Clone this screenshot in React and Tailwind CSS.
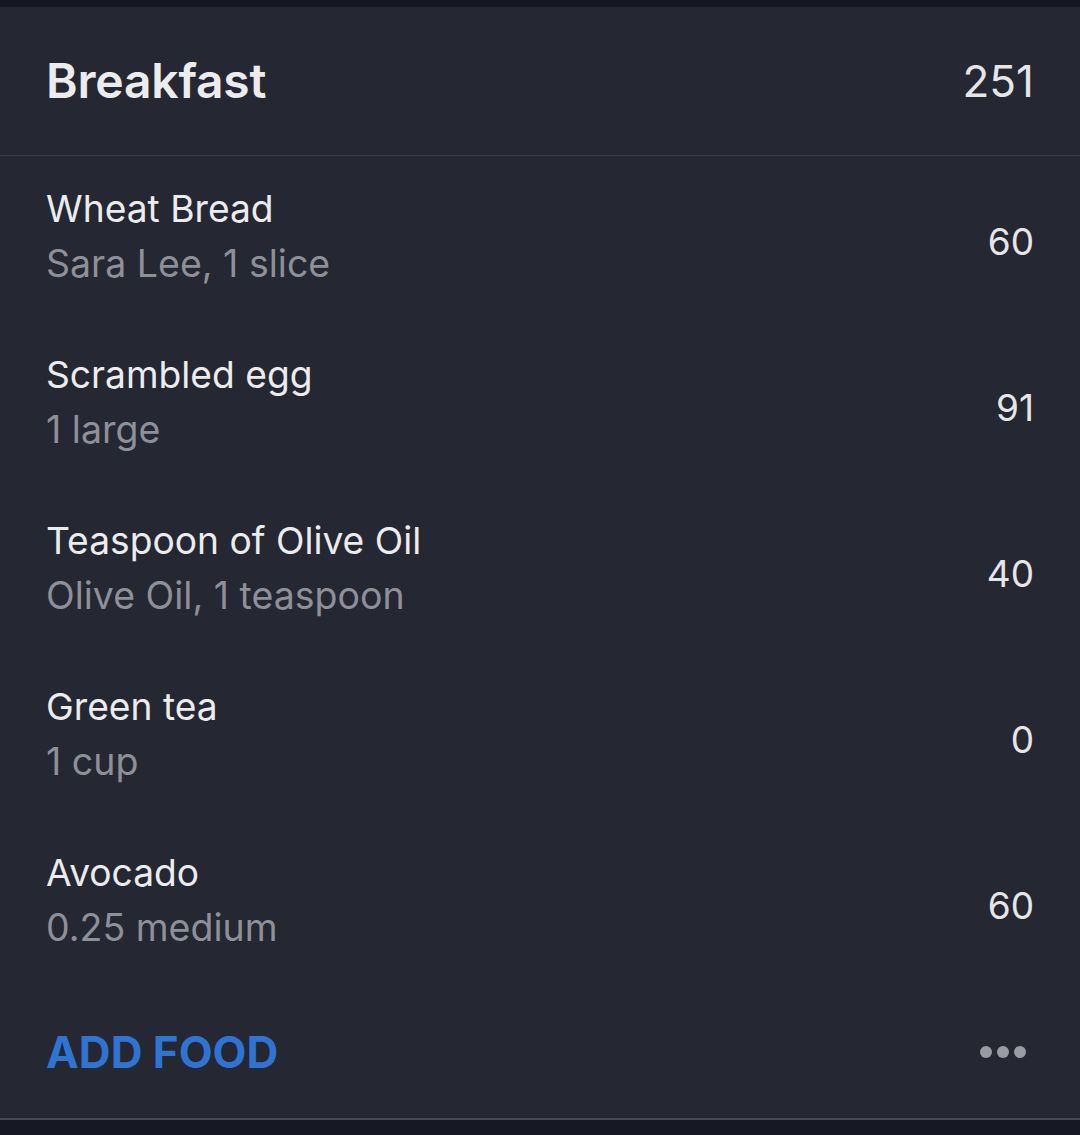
export default function App() {
  const items = [
    { name: "Wheat Bread", sub: "Sara Lee, 1 slice", cal: "60" },
    { name: "Scrambled egg", sub: "1 large", cal: "91" },
    { name: "Teaspoon of Olive Oil", sub: "Olive Oil, 1 teaspoon", cal: "40" },
    { name: "Green tea", sub: "1 cup", cal: "0" },
    { name: "Avocado", sub: "0.25 medium", cal: "60" },
  ];
  return (
    <div className="w-[1080px] h-[1135px] bg-[#161824] flex flex-col overflow-hidden" style={{ fontFamily: "Inter, 'Noto Sans', sans-serif" }}>
      <div className="h-[7px] shrink-0" />
      <div className="bg-[#252732] flex flex-col border-b-2 border-[#474953]">
        <div className="h-[149px] flex items-center justify-between pl-[46px] pr-[46px] border-b border-[#3a3c47]">
          <span className="text-[48px] font-semibold text-[#ececee] tracking-[-0.2px]">Breakfast</span>
          <span className="text-[44px] text-[#e6e6e8]">251</span>
        </div>
        {items.map((it) => (
          <div key={it.name} className="h-[166px] flex items-center justify-between pl-[46px] pr-[46px]">
            <div className="flex flex-col mb-[6px]">
              <span className="text-[37.2px] leading-[55px] text-[#ececee]">{it.name}</span>
              <span className="text-[37.5px] leading-[55px] text-[#8e9099]">{it.sub}</span>
            </div>
            <span className="text-[37px] text-[#e6e6e8] mt-[6px]">{it.cal}</span>
          </div>
        ))}
        <div className="h-[132px] flex items-center justify-between pl-[46px] pr-[54px]">
          <span className="text-[44px] font-bold text-[#2f74d2]">ADD FOOD</span>
          <div className="flex gap-[5px]">
            <div className="w-[12px] h-[12px] rounded-full bg-[#9a9ca5]" />
            <div className="w-[12px] h-[12px] rounded-full bg-[#9a9ca5]" />
            <div className="w-[12px] h-[12px] rounded-full bg-[#9a9ca5]" />
          </div>
        </div>
      </div>
    </div>
  );
}
